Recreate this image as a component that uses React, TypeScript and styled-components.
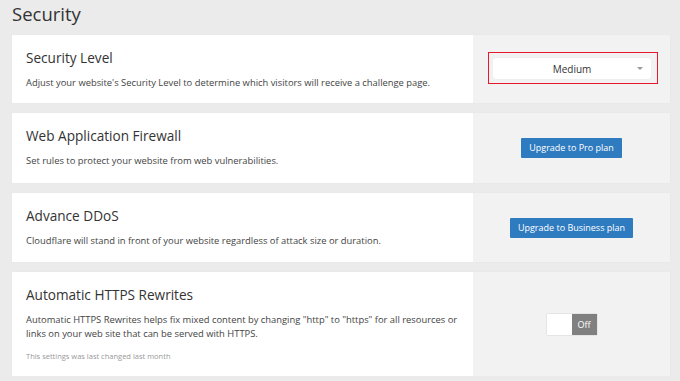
import styled, { createGlobalStyle } from "styled-components";

const GlobalStyle = createGlobalStyle`
  html, body {
    margin: 0;
    padding: 0;
    background: #ebebeb;
  }
  body {
    font-family: "Open Sans", "Liberation Sans", sans-serif;
    color: #333;
  }
`;

const Page = styled.div`
  padding: 1px 10px 0 12px;
  display: flex;
  flex-direction: column;
  row-gap: 10px;
`;

const Title = styled.h1`
  margin: 0 0 -2px 0;
  font-size: 18.5px;
  font-weight: 400;
  line-height: 26px;
  color: #333;
`;

const Card = styled.section<{ $height: number }>`
  display: grid;
  grid-template-columns: 461px 1fr;
  height: ${({ $height }) => $height}px;
  box-shadow: 0 0 1px rgba(0, 0, 0, 0.06);
`;

const Info = styled.div`
  background: #fff;
  padding: 13px 14px 0 14px;
  display: flex;
  flex-direction: column;
`;

const CardTitle = styled.h2`
  margin: 0;
  font-size: 13.6px;
  font-weight: 400;
  line-height: 20px;
  color: #333;
`;

const Desc = styled.p`
  margin: 8px 0 0 0;
  font-size: 9.4px;
  line-height: 13.5px;
  color: #444;
`;

const Note = styled.p`
  margin: 11px 0 0 0;
  font-size: 7.5px;
  line-height: 11px;
  color: #999;
`;

const Control = styled.div`
  background: #f2f2f2;
  display: flex;
  align-items: center;
  justify-content: center;
`;

const Highlight = styled.div`
  border: 1px solid #e8192c;
  padding: 5px 6px 4px 4px;
  margin: 0 0 2px 3px;
`;

const Select = styled.div`
  width: 158px;
  height: 21px;
  box-sizing: border-box;
  background: #fff;
  border-radius: 2px;
  box-shadow: 0 0 1px rgba(0, 0, 0, 0.15);
  display: flex;
  align-items: center;
  justify-content: center;
  position: relative;
  font-size: 10px;
  color: #333;
`;

const Caret = styled.span`
  position: absolute;
  right: 8px;
  top: 9px;
  width: 0;
  height: 0;
  border-left: 3px solid transparent;
  border-right: 3px solid transparent;
  border-top: 3px solid #999;
`;

const Button = styled.button`
  border: none;
  border-radius: 1px;
  background: #2f7bbf;
  color: #fff;
  font-family: inherit;
  font-size: 9px;
  line-height: 20px;
  height: 20px;
  padding: 0 8px;
  cursor: pointer;
`;

const Toggle = styled.div`
  display: flex;
  width: 50px;
  height: 21px;
  box-shadow: 0 0 1px rgba(0, 0, 0, 0.3);
`;

const ToggleHalf = styled.span<{ $off?: boolean }>`
  flex: 1;
  background: ${({ $off }) => ($off ? "#808080" : "#fff")};
  color: #fff;
  font-size: 9px;
  display: flex;
  align-items: center;
  justify-content: center;
`;

export default function App() {
  return (
    <>
      <GlobalStyle />
      <Page>
        <Title>Security</Title>
        <Card $height={68}>
          <Info>
            <CardTitle>Security Level</CardTitle>
            <Desc>
              Adjust your website's Security Level to determine which visitors
              will receive a challenge page.
            </Desc>
          </Info>
          <Control>
            <Highlight>
              <Select>
                Medium
                <Caret />
              </Select>
            </Highlight>
          </Control>
        </Card>
        <Card $height={70}>
          <Info>
            <CardTitle>Web Application Firewall</CardTitle>
            <Desc>Set rules to protect your website from web vulnerabilities.</Desc>
          </Info>
          <Control>
            <Button>Upgrade to Pro plan</Button>
          </Control>
        </Card>
        <Card $height={69}>
          <Info>
            <CardTitle>Advance DDoS</CardTitle>
            <Desc>
              Cloudflare will stand in front of your website regardless of
              attack size or duration.
            </Desc>
          </Info>
          <Control>
            <Button>Upgrade to Business plan</Button>
          </Control>
        </Card>
        <Card $height={104}>
          <Info>
            <CardTitle>Automatic HTTPS Rewrites</CardTitle>
            <Desc>
              Automatic HTTPS Rewrites helps fix mixed content by changing
              "http" to "https" for all resources or links on your web site
              that can be served with HTTPS.
            </Desc>
            <Note>This settings was last changed last month</Note>
          </Info>
          <Control>
            <Toggle>
              <ToggleHalf />
              <ToggleHalf $off>Off</ToggleHalf>
            </Toggle>
          </Control>
        </Card>
      </Page>
    </>
  );
}
